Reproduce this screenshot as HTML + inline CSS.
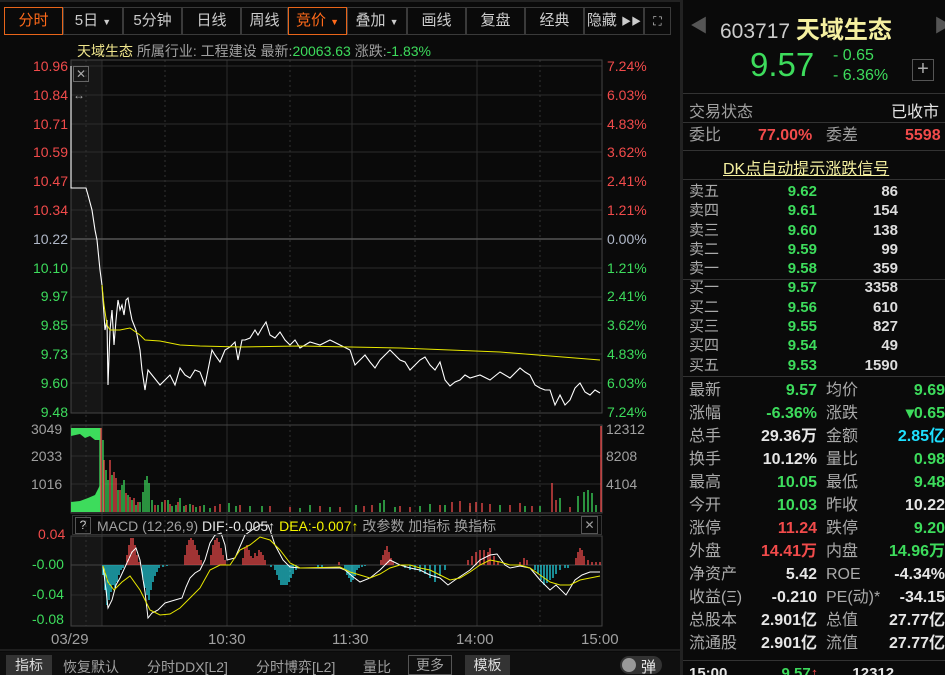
<!DOCTYPE html>
<html><head><meta charset="utf-8"><style>
*{margin:0;padding:0;box-sizing:border-box}
html,body{width:945px;height:675px;overflow:hidden}
body{background:#0a0a0a;font-family:"Liberation Sans","Noto Sans CJK SC",sans-serif;color:#ccc;position:relative;font-size:14px}
.a{position:absolute;white-space:nowrap}
.tab{position:absolute;top:7px;height:28px;border:1px solid #3a3a3a;color:#ccc;font-size:15px;line-height:26px;text-align:center}
.r{color:#f24b4b}.g{color:#3ddc5c}.w{color:#e6e6e6}.y{color:#f0e68c}.gr{color:#a0a0a0}
.rp div{position:absolute;white-space:nowrap}
</style></head><body>
<div class="tab" style="left:4px;width:59px;border-color:#e8651a;color:#ff6a1a">分时</div>
<div class="tab" style="left:63px;width:60px">5日 <span style="font-size:9px">▼</span></div>
<div class="tab" style="left:123px;width:59px">5分钟</div>
<div class="tab" style="left:182px;width:59px">日线</div>
<div class="tab" style="left:241px;width:47px">周线</div>
<div class="tab" style="left:288px;width:59px;border-color:#e8651a;color:#ff6a1a">竞价 <span style="font-size:9px">▼</span></div>
<div class="tab" style="left:347px;width:60px">叠加 <span style="font-size:9px">▼</span></div>
<div class="tab" style="left:407px;width:59px">画线</div>
<div class="tab" style="left:466px;width:59px">复盘</div>
<div class="tab" style="left:525px;width:59px">经典</div>
<div class="tab" style="left:584px;width:60px">隐藏 <span style="font-size:10px">▶▶</span></div>
<div class="tab" style="left:644px;width:27px;font-size:12px">⛶</div>
<div class="a" style="left:0;top:0;width:680px;height:2px;background:#222"></div>

<div class="a y" style="left:77px;top:41px;font-size:14px">天域生态 <span class="gr">所属行业: 工程建设 最新:</span><span class="g">20063.63</span> <span class="gr">涨跌:</span><span class="g">-1.83%</span></div>

<svg class="a" style="left:0;top:0" width="680" height="675">
<rect x="71" y="60" width="31" height="353" fill="#161616"/>
<rect x="71" y="425" width="31" height="88" fill="#161616"/>
<rect x="71" y="536" width="31" height="90" fill="#161616"/>
<g stroke="#2c2c2c" stroke-width="1">
<line x1="71" y1="66" x2="602" y2="66"/><line x1="71" y1="95" x2="602" y2="95"/><line x1="71" y1="124" x2="602" y2="124"/><line x1="71" y1="152" x2="602" y2="152"/><line x1="71" y1="181" x2="602" y2="181"/><line x1="71" y1="210" x2="602" y2="210"/>
<line x1="71" y1="268" x2="602" y2="268"/><line x1="71" y1="297" x2="602" y2="297"/><line x1="71" y1="325" x2="602" y2="325"/><line x1="71" y1="354" x2="602" y2="354"/><line x1="71" y1="383" x2="602" y2="383"/>
<line x1="71" y1="456" x2="602" y2="456"/><line x1="71" y1="484" x2="602" y2="484"/>
<line x1="71" y1="595" x2="602" y2="595"/>
<line x1="102" y1="60" x2="102" y2="626"/><line x1="227" y1="60" x2="227" y2="626"/><line x1="352" y1="60" x2="352" y2="626"/><line x1="477" y1="60" x2="477" y2="626"/>
</g>
<g stroke="#333" stroke-dasharray="2,3"><line x1="86" y1="60" x2="86" y2="626"/><line x1="165" y1="60" x2="165" y2="626"/><line x1="290" y1="60" x2="290" y2="626"/><line x1="415" y1="60" x2="415" y2="626"/><line x1="540" y1="60" x2="540" y2="626"/></g>
<line x1="71" y1="239" x2="602" y2="239" stroke="#555" stroke-width="1.5"/>
<line x1="71" y1="565" x2="602" y2="565" stroke="#444" />
<g fill="none" stroke="#444"><rect x="71" y="60" width="531" height="353"/><rect x="71" y="425" width="531" height="88"/><rect x="71" y="536" width="531" height="90"/></g>
<line x1="0" y1="650" x2="680" y2="650" stroke="#333"/>
<polyline fill="none" stroke="#fff" stroke-width="1.1" points="71,66 71,188 86,188 88,195 92,210 95,230 97,240 100,270 102,285 103,300 105,330 107,320 108,385 110,330 112,310 114,345 116,320 118,300 120,310 122,305 124,315 126,300 128,298 130,310 132,320 134,325 136,330 138,340 140,350 142,370 145,390 148,370 152,375 156,380 160,385 165,380 170,375 175,385 180,368 185,375 190,378 195,370 200,372 205,385 212,350 215,355 220,362 225,350 230,347 235,342 238,360 242,340 245,340 250,338 255,330 258,335 262,328 266,322 270,335 275,338 280,332 285,340 290,345 295,340 300,348 305,345 310,342 320,345 330,340 340,345 350,350 355,365 360,360 365,355 370,362 375,368 380,360 385,355 390,350 395,355 400,360 405,362 410,370 415,365 420,360 425,357 430,365 435,370 440,362 445,380 450,386 455,382 460,380 465,375 470,378 480,375 490,380 500,372 510,378 520,368 525,372 530,375 535,385 540,388 545,390 550,390 555,405 560,395 565,405 570,400 575,388 580,383 585,392 590,395 595,390 600,393"/>
<polyline fill="none" stroke="#e8e800" stroke-width="1" points="102,285 104,305 107,325 110,330 120,330 130,328 140,335 145,340 160,341 180,345 200,346 240,347 300,346 400,348 500,352 600,360"/>
<polygon fill="#3ddc5c" points="71,428 100,428 100,440 95,440 90,436 85,438 80,434 71,436"/>
<polygon fill="#3ddc5c" points="71,512 71,502 80,501 88,498 95,495 100,485 100,512"/>
<g stroke-width="1.3">
<path stroke="#3ddc5c" d="M100 512V428M103 512V440M106 512V470M108 512V480M112 512V475M118 512V490M122 512V485M124 512V480M128 512V495M132 512V500M136 512V505M140 512V502M143 512V492M145 512V480M147 512V476M149 512V483M152 512V500M158 512V505M162 512V502M168 512V500M172 512V506M176 512V505M180 512V498M184 512V506M190 512V504M196 512V507M204 512V505M210 512V508M229 512V503M236 512V506M250 512V506M262 512V506M300 512V508M310 512V505M330 512V507M356 512V505M380 512V503M384 512V500M395 512V507M420 512V506M430 512V504M445 512V505M470 512V506M500 512V505M525 512V506M540 512V506M560 512V498M578 512V496M584 512V492M588 512V490M592 512V493M596 512V505"/>
<path stroke="#f24b4b" d="M101 512V428M104 512V460M110 512V460M114 512V472M116 512V478M120 512V490M126 512V493M130 512V497M134 512V498M138 512V502M155 512V505M165 512V500M170 512V504M178 512V502M186 512V505M193 512V505M200 512V506M215 512V506M220 512V504M240 512V505M270 512V506M290 512V507M320 512V506M340 512V507M364 512V506M372 512V505M400 512V506M410 512V507M440 512V505M452 512V502M460 512V501M470 512V503M476 512V502M482 512V503M490 512V504M510 512V505M520 512V503M532 512V506M552 512V483M556 512V500M570 512V507M601 512V426"/>
</g>
<g stroke-width="1.3">
<path stroke="#22d3e0" d="M103 565V575M105 565V590M107 565V605M109 565V600M111 565V592M113 565V585M115 565V588M117 565V582M119 565V575M121 565V570M123 565V568M143 565V580M145 565V588M147 565V595M149 565V600M151 565V590M153 565V582M155 565V576M157 565V572M159 565V568M163 565V567M167 565V566M271 565V567M275 565V570M277 565V575M279 565V580M281 565V585M283 565V585M285 565V585M287 565V585M289 565V582M291 565V578M293 565V574M296 565V570M318 565V568M322 565V567M345 565V570M347 565V575M349 565V578M351 565V582M353 565V580M355 565V576M357 565V570M359 565V568M362 565V567M365 565V566M405 565V568M410 565V570M415 565V570M420 565V572M425 565V574M430 565V578M435 565V582M440 565V576M445 565V570M535 565V570M538 565V574M541 565V580M544 565V585M547 565V583M550 565V580M553 565V578M556 565V574M560 565V570M565 565V568M568 565V568"/>
<path stroke="#f24b4b" d="M127 565V555M129 565V545M131 565V538M133 565V538M135 565V545M137 565V555M139 565V562M185 565V555M187 565V545M189 565V540M191 565V538M193 565V540M195 565V545M197 565V550M199 565V555M201 565V560M211 565V555M213 565V545M215 565V540M217 565V538M219 565V542M221 565V548M223 565V555M225 565V560M243 565V558M245 565V548M247 565V545M249 565V550M251 565V556M253 565V558M255 565V553M257 565V556M259 565V550M261 565V552M263 565V555M265 565V560M339 565V562M381 565V560M383 565V555M385 565V550M387 565V546M389 565V552M391 565V558M393 565V562M468 565V560M472 565V556M476 565V552M480 565V550M484 565V550M488 565V552M490 565V548M494 565V556M498 565V562M520 565V562M524 565V558M527 565V560M576 565V558M578 565V552M580 565V548M582 565V550M584 565V556M588 565V560M592 565V562M596 565V562M600 565V562"/>
</g>
<polyline fill="none" stroke="#fff" stroke-width="1" points="103,566 106,590 108,608 112,600 116,585 120,578 126,565 132,552 136,548 140,560 145,592 148,618 152,613 158,610 165,603 175,600 182,598 186,587 190,578 195,573 200,570 205,560 210,543 215,535 221,533 225,545 227,560 235,558 245,535 252,530 260,525 268,525 270,530 275,545 283,560 290,567 300,568 340,568 345,570 352,576 360,582 370,578 380,570 390,560 400,565 410,568 420,570 430,575 440,578 448,585 455,580 470,570 480,560 490,555 497,554 505,565 510,568 520,566 530,568 540,580 550,590 556,585 566,595 575,580 582,575 590,572 600,572"/>
<polyline fill="none" stroke="#e8e800" stroke-width="1" points="103,566 108,582 114,590 122,582 130,576 140,590 150,610 160,615 170,614 180,608 190,598 200,588 210,570 220,565 230,565 240,550 250,545 260,537 270,540 280,550 290,563 300,568 340,567 350,572 360,575 370,578 380,574 390,568 400,565 410,565 420,568 430,570 440,575 450,580 460,578 470,572 480,565 490,560 500,562 510,565 520,565 530,568 540,575 550,582 560,585 570,585 580,580 590,578 600,576"/>
</svg>

<div style="position:absolute;left:0;top:52px;width:68px;text-align:right;font-size:14px;line-height:28.8px">
<div class="r">10.96</div><div class="r">10.84</div><div class="r">10.71</div><div class="r">10.59</div><div class="r">10.47</div><div class="r">10.34</div><div style="color:#b0b8c8">10.22</div><div class="g">10.10</div><div class="g">9.97</div><div class="g">9.85</div><div class="g">9.73</div><div class="g">9.60</div><div class="g">9.48</div></div>
<div style="position:absolute;left:607px;top:52px;font-size:14px;line-height:28.8px">
<div class="r">7.24%</div><div class="r">6.03%</div><div class="r">4.83%</div><div class="r">3.62%</div><div class="r">2.41%</div><div class="r">1.21%</div><div style="color:#b0b8c8">0.00%</div><div class="g">1.21%</div><div class="g">2.41%</div><div class="g">3.62%</div><div class="g">4.83%</div><div class="g">6.03%</div><div class="g">7.24%</div></div>
<div class="a" style="left:73px;top:66px;width:16px;height:16px;border:1px solid #666;color:#aaa;font-size:12px;line-height:14px;text-align:center">✕</div>
<div class="a" style="left:73px;top:88px;color:#aaa;font-size:12px">↔</div>
<div class="a gr" style="left:31px;top:421px">3049</div><div class="a gr" style="left:31px;top:448px">2033</div><div class="a gr" style="left:31px;top:476px">1016</div>
<div class="a gr" style="left:606px;top:421px">12312</div><div class="a gr" style="left:606px;top:448px">8208</div><div class="a gr" style="left:606px;top:476px">4104</div>
<div class="a" style="left:72px;top:515px;width:530px;height:20px;border:1px solid #333"></div>
<div class="a" style="left:75px;top:517px;width:16px;height:17px;border:1px solid #555;font-size:12px;text-align:center;line-height:15px">?</div>
<div class="a" style="left:97px;top:516px;font-size:14px"><span class="gr">MACD (12,26,9)</span> <span class="w">DIF:-0.005↑</span> <span style="color:#f5f500">DEA:-0.007↑</span> <span class="gr">改参数 加指标 换指标</span></div>
<div class="a gr" style="left:581px;top:516px;width:17px;height:18px;border:1px solid #555;text-align:center;font-size:12px;line-height:16px">✕</div>
<div class="a r" style="left:38px;top:526px">0.04</div><div class="a g" style="left:32px;top:556px">-0.00</div><div class="a g" style="left:32px;top:586px">-0.04</div><div class="a g" style="left:32px;top:611px">-0.08</div>
<div class="a gr" style="left:51px;top:631px;font-size:15px">03/29</div><div class="a gr" style="left:208px;top:631px;font-size:15px">10:30</div><div class="a gr" style="left:332px;top:631px;font-size:15px">11:30</div><div class="a gr" style="left:456px;top:631px;font-size:15px">14:00</div><div class="a gr" style="left:581px;top:631px;font-size:15px">15:00</div>
<div class="a" style="left:0;top:652px;width:680px;height:23px;background:#0f0f0f"></div>
<div class="a" style="left:6px;top:655px;width:46px;height:20px;background:#333;color:#ddd;text-align:center;line-height:20px">指标</div>
<div class="a gr" style="left:63px;top:657px">恢复默认</div><div class="a gr" style="left:147px;top:657px">分时DDX[L2]</div><div class="a gr" style="left:256px;top:657px">分时博弈[L2]</div><div class="a gr" style="left:363px;top:657px">量比</div>
<div class="a gr" style="left:408px;top:655px;width:44px;height:20px;border:1px solid #555;text-align:center;line-height:18px">更多</div>
<div class="a" style="left:465px;top:655px;width:45px;height:20px;background:#333;color:#ddd;text-align:center;line-height:20px">模板</div>
<div class="a" style="left:620px;top:656px;width:42px;height:18px;border-radius:9px;background:#333"></div>
<div class="a" style="left:622px;top:658px;width:14px;height:14px;border-radius:7px;background:#999"></div>
<div class="a w" style="left:641px;top:656px;font-size:15px">弹</div>

<div class="a" style="left:680px;top:0;width:3px;height:675px;background:#222"></div>
<div class="rp">
<div style="left:690px;top:12px;color:#555;font-size:18px">◀</div>
<div style="left:934px;top:12px;color:#555;font-size:18px">▶</div>
<div style="left:720px;top:10px;font-size:21px;color:#ccc">603717 <span style="font-size:24px;font-weight:bold;color:#f5f0a0">天域生态</span></div>
<div class="g" style="left:750px;top:46px;font-size:33px">9.57</div>
<div class="g" style="left:833px;top:47px;font-size:16px">- 0.65</div>
<div class="g" style="left:833px;top:67px;font-size:16px">- 6.36%</div>
<div style="left:912px;top:59px;width:22px;height:22px;border:1px solid #555;color:#aaa;text-align:center;font-size:20px;line-height:19px">+</div>
<div style="left:683px;top:93px;width:262px;height:1px;background:#333"></div>
<div class="gr" style="left:689px;top:98px;font-size:16px">交易状态</div><div class="w" style="left:891px;top:98px;font-size:16px">已收市</div>
<div style="left:683px;top:122px;width:262px;height:1px;background:#333"></div>
<div class="gr" style="left:689px;top:126px;font-size:16px;line-height:20px">委比</div><div class="r" style="left:758px;top:126px;font-size:16px;line-height:20px;font-weight:bold">77.00%</div><div class="gr" style="left:826px;top:126px;font-size:16px;line-height:20px">委差</div><div class="r" style="left:905px;top:126px;font-size:16px;line-height:20px;font-weight:bold">5598</div>
<div style="left:683px;top:150px;width:262px;height:1px;background:#333"></div>
<div style="left:723px;top:155px;font-size:16px;text-decoration:underline;color:#f5f0a0">DK点自动提示涨跌信号</div>
<div style="left:683px;top:179px;width:262px;height:1px;background:#333"></div>
</div>
<div style="position:absolute;left:689px;top:182px;font-size:15px;line-height:19.3px;color:#aaa"><div>卖五</div><div>卖四</div><div>卖三</div><div>卖二</div><div>卖一</div><div>买一</div><div>买二</div><div>买三</div><div>买四</div><div>买五</div></div>
<div style="position:absolute;left:750px;top:182px;width:67px;text-align:right;font-size:15px;line-height:19.3px;font-weight:bold" class="g"><div>9.62</div><div>9.61</div><div>9.60</div><div>9.59</div><div>9.58</div><div>9.57</div><div>9.56</div><div>9.55</div><div>9.54</div><div>9.53</div></div>
<div style="position:absolute;left:840px;top:182px;width:58px;text-align:right;font-size:15px;line-height:19.3px;font-weight:bold;color:#ddd"><div>86</div><div>154</div><div>138</div><div>99</div><div>359</div><div>3358</div><div>610</div><div>827</div><div>49</div><div>1590</div></div>
<div class="a" style="left:683px;top:279px;width:262px;height:1px;background:#333"></div>
<div class="a" style="left:683px;top:376px;width:262px;height:1px;background:#333"></div>
<div style="position:absolute;left:689px;top:379px;font-size:16px;line-height:23px;color:#aaa"><div>最新</div><div>涨幅</div><div>总手</div><div>换手</div><div>最高</div><div>今开</div><div>涨停</div><div>外盘</div><div>净资产</div><div>收益(Ξ)</div><div>总股本</div><div>流通股</div></div>
<div style="position:absolute;left:740px;top:379px;width:77px;text-align:right;font-size:16px;line-height:23px;font-weight:bold"><div class="g">9.57</div><div class="g">-6.36%</div><div class="w">29.36万</div><div class="w">10.12%</div><div class="g">10.05</div><div class="g">10.03</div><div class="r">11.24</div><div class="r">14.41万</div><div class="w">5.42</div><div class="w">-0.210</div><div class="w">2.901亿</div><div class="w">2.901亿</div></div>
<div style="position:absolute;left:826px;top:379px;font-size:16px;line-height:23px;color:#aaa"><div>均价</div><div>涨跌</div><div>金额</div><div>量比</div><div>最低</div><div>昨收</div><div>跌停</div><div>内盘</div><div>ROE</div><div>PE(动)*</div><div>总值</div><div>流值</div></div>
<div style="position:absolute;left:860px;top:379px;width:85px;text-align:right;font-size:16px;line-height:23px;font-weight:bold"><div class="g">9.69</div><div class="g">▾0.65</div><div style="color:#1ee0ff">2.85亿</div><div class="g">0.98</div><div class="g">9.48</div><div class="w">10.22</div><div class="g">9.20</div><div class="g">14.96万</div><div class="w">-4.34%</div><div class="w">-34.15</div><div class="w">27.77亿</div><div class="w">27.77亿</div></div>
<div class="a" style="left:683px;top:660px;width:262px;height:1px;background:#333"></div>
<div class="a w" style="left:689px;top:665px;font-size:15px;font-weight:bold">15:00 <span class="g" style="margin-left:50px">9.57</span><span class="r">↑</span> <span style="margin-left:30px">12312</span></div>
</body></html>
